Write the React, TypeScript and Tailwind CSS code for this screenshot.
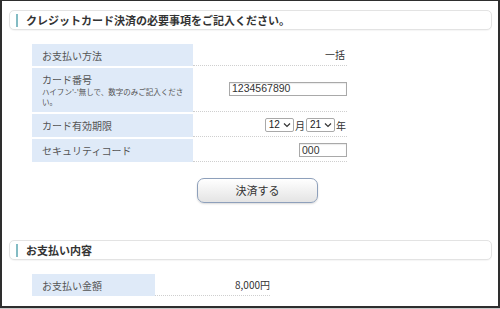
import React from 'react';

const font = { fontFamily: '"Noto Sans CJK JP", "Noto Sans", sans-serif' };

function SectionTitle({ children }: { children: React.ReactNode }) {
  return (
    <div className="ml-[7px] flex h-[20px] w-[483px] items-center rounded-[5px] border border-[#e3e3e3] bg-white shadow-[0_1px_1px_rgba(0,0,0,0.04)]">
      <div className="ml-[6px] h-[13px] w-[2px] bg-[#84bcc4]" />
      <span className="ml-[8px] text-[11px] font-bold leading-none text-[#333]">{children}</span>
    </div>
  );
}

function Select({ value }: { value: string }) {
  return (
    <div className="flex h-[14px] items-center gap-[3px] rounded-[2px] border border-[#a9a9a9] bg-white pl-[3px] pr-[2px] text-[10px] leading-none text-[#222]">
      <span style={{ fontFamily: '"Liberation Sans", Arial, sans-serif' }}>{value}</span>
      <svg width="8" height="6" viewBox="0 0 8 6" fill="none">
        <path d="M1 1.5 L4 4.5 L7 1.5" stroke="#333" strokeWidth="1.2" />
      </svg>
    </div>
  );
}

function TextBox({ value, width }: { value: string; width: string }) {
  return (
    <div
      className={`flex h-[14px] items-center border border-[#a9a9a9] bg-white pl-[2px] text-[10.5px] leading-none text-[#333] shadow-[inset_0_1px_1px_rgba(0,0,0,0.08)] ${width}`}
      style={{ fontFamily: '"Liberation Sans Narrow", "Liberation Sans", Arial, sans-serif' }}
    >
      {value}
    </div>
  );
}

export default function App() {
  return (
    <div className="h-[309px] w-[500px] bg-[#c9c9c9]" style={font}>
      <div className="h-[308px] w-[500px] border-t border-b-2 border-l-2 border-r-2 border-[#2e2e2e] bg-white">
        <div className="pt-[9px]">
          <SectionTitle>クレジットカード決済の必要事項をご記入ください。</SectionTitle>
        </div>

        {/* Card form */}
        <div className="ml-[30px] mt-[14px] flex w-[315px] flex-col gap-[2px]">
          <div className="flex h-[22px]">
            <div className="flex w-[161px] items-center bg-[#dfeaf8] pl-[10px] text-[10px] text-[#555]">お支払い方法</div>
            <div className="flex w-[154px] items-center justify-end border-b border-dotted border-[#cfcfcf] pr-[2px] text-[10px] text-[#333]">一括</div>
          </div>
          <div className="flex h-[44px]">
            <div className="flex w-[161px] flex-col justify-center bg-[#dfeaf8] pl-[10px] pr-[6px] text-[#555]">
              <span className="text-[10px] leading-[14px]">カード番号</span>
              <span className="text-[7.5px] leading-[10px]">ハイフン'-'無しで、数字のみご記入ください。</span>
            </div>
            <div className="flex w-[154px] items-center justify-end border-b border-dotted border-[#cfcfcf] pb-[2px]">
              <TextBox value="1234567890" width="w-[118px]" />
            </div>
          </div>
          <div className="flex h-[23px]">
            <div className="flex w-[161px] items-center bg-[#dfeaf8] pl-[10px] text-[10px] text-[#555]">カード有効期限</div>
            <div className="flex w-[154px] items-center justify-end gap-[1px] border-b border-dotted border-[#cfcfcf] text-[10px] text-[#333]">
              <Select value="12" />
              <span>月</span>
              <Select value="21" />
              <span className="mr-[1px]">年</span>
            </div>
          </div>
          <div className="flex h-[23px]">
            <div className="flex w-[161px] items-center bg-[#dfeaf8] pl-[10px] text-[10px] text-[#555]">セキュリティコード</div>
            <div className="flex w-[154px] items-center justify-end border-b border-dotted border-[#cfcfcf]">
              <TextBox value="000" width="w-[48px]" />
            </div>
          </div>
        </div>

        <div className="ml-[195px] mt-[16px]">
          <button className="flex h-[25px] w-[121px] items-center justify-center rounded-[7px] border border-[#8ea0bb] bg-gradient-to-b from-white to-[#e4e4e4] text-[11px] text-[#333] shadow-[0_1px_2px_rgba(0,0,0,0.15)]">
            決済する
          </button>
        </div>

        <div className="mt-[37px]">
          <SectionTitle>お支払い内容</SectionTitle>
        </div>

        <div className="ml-[30px] mt-[14px] flex h-[22px] w-[238px]">
          <div className="flex w-[123px] items-center bg-[#dfeaf8] pl-[10px] text-[10px] text-[#555]">お支払い金額</div>
          <div className="flex w-[115px] items-center justify-end border-b border-dotted border-[#cfcfcf] text-[10px] text-[#333]">8,000円</div>
        </div>
      </div>
    </div>
  );
}
